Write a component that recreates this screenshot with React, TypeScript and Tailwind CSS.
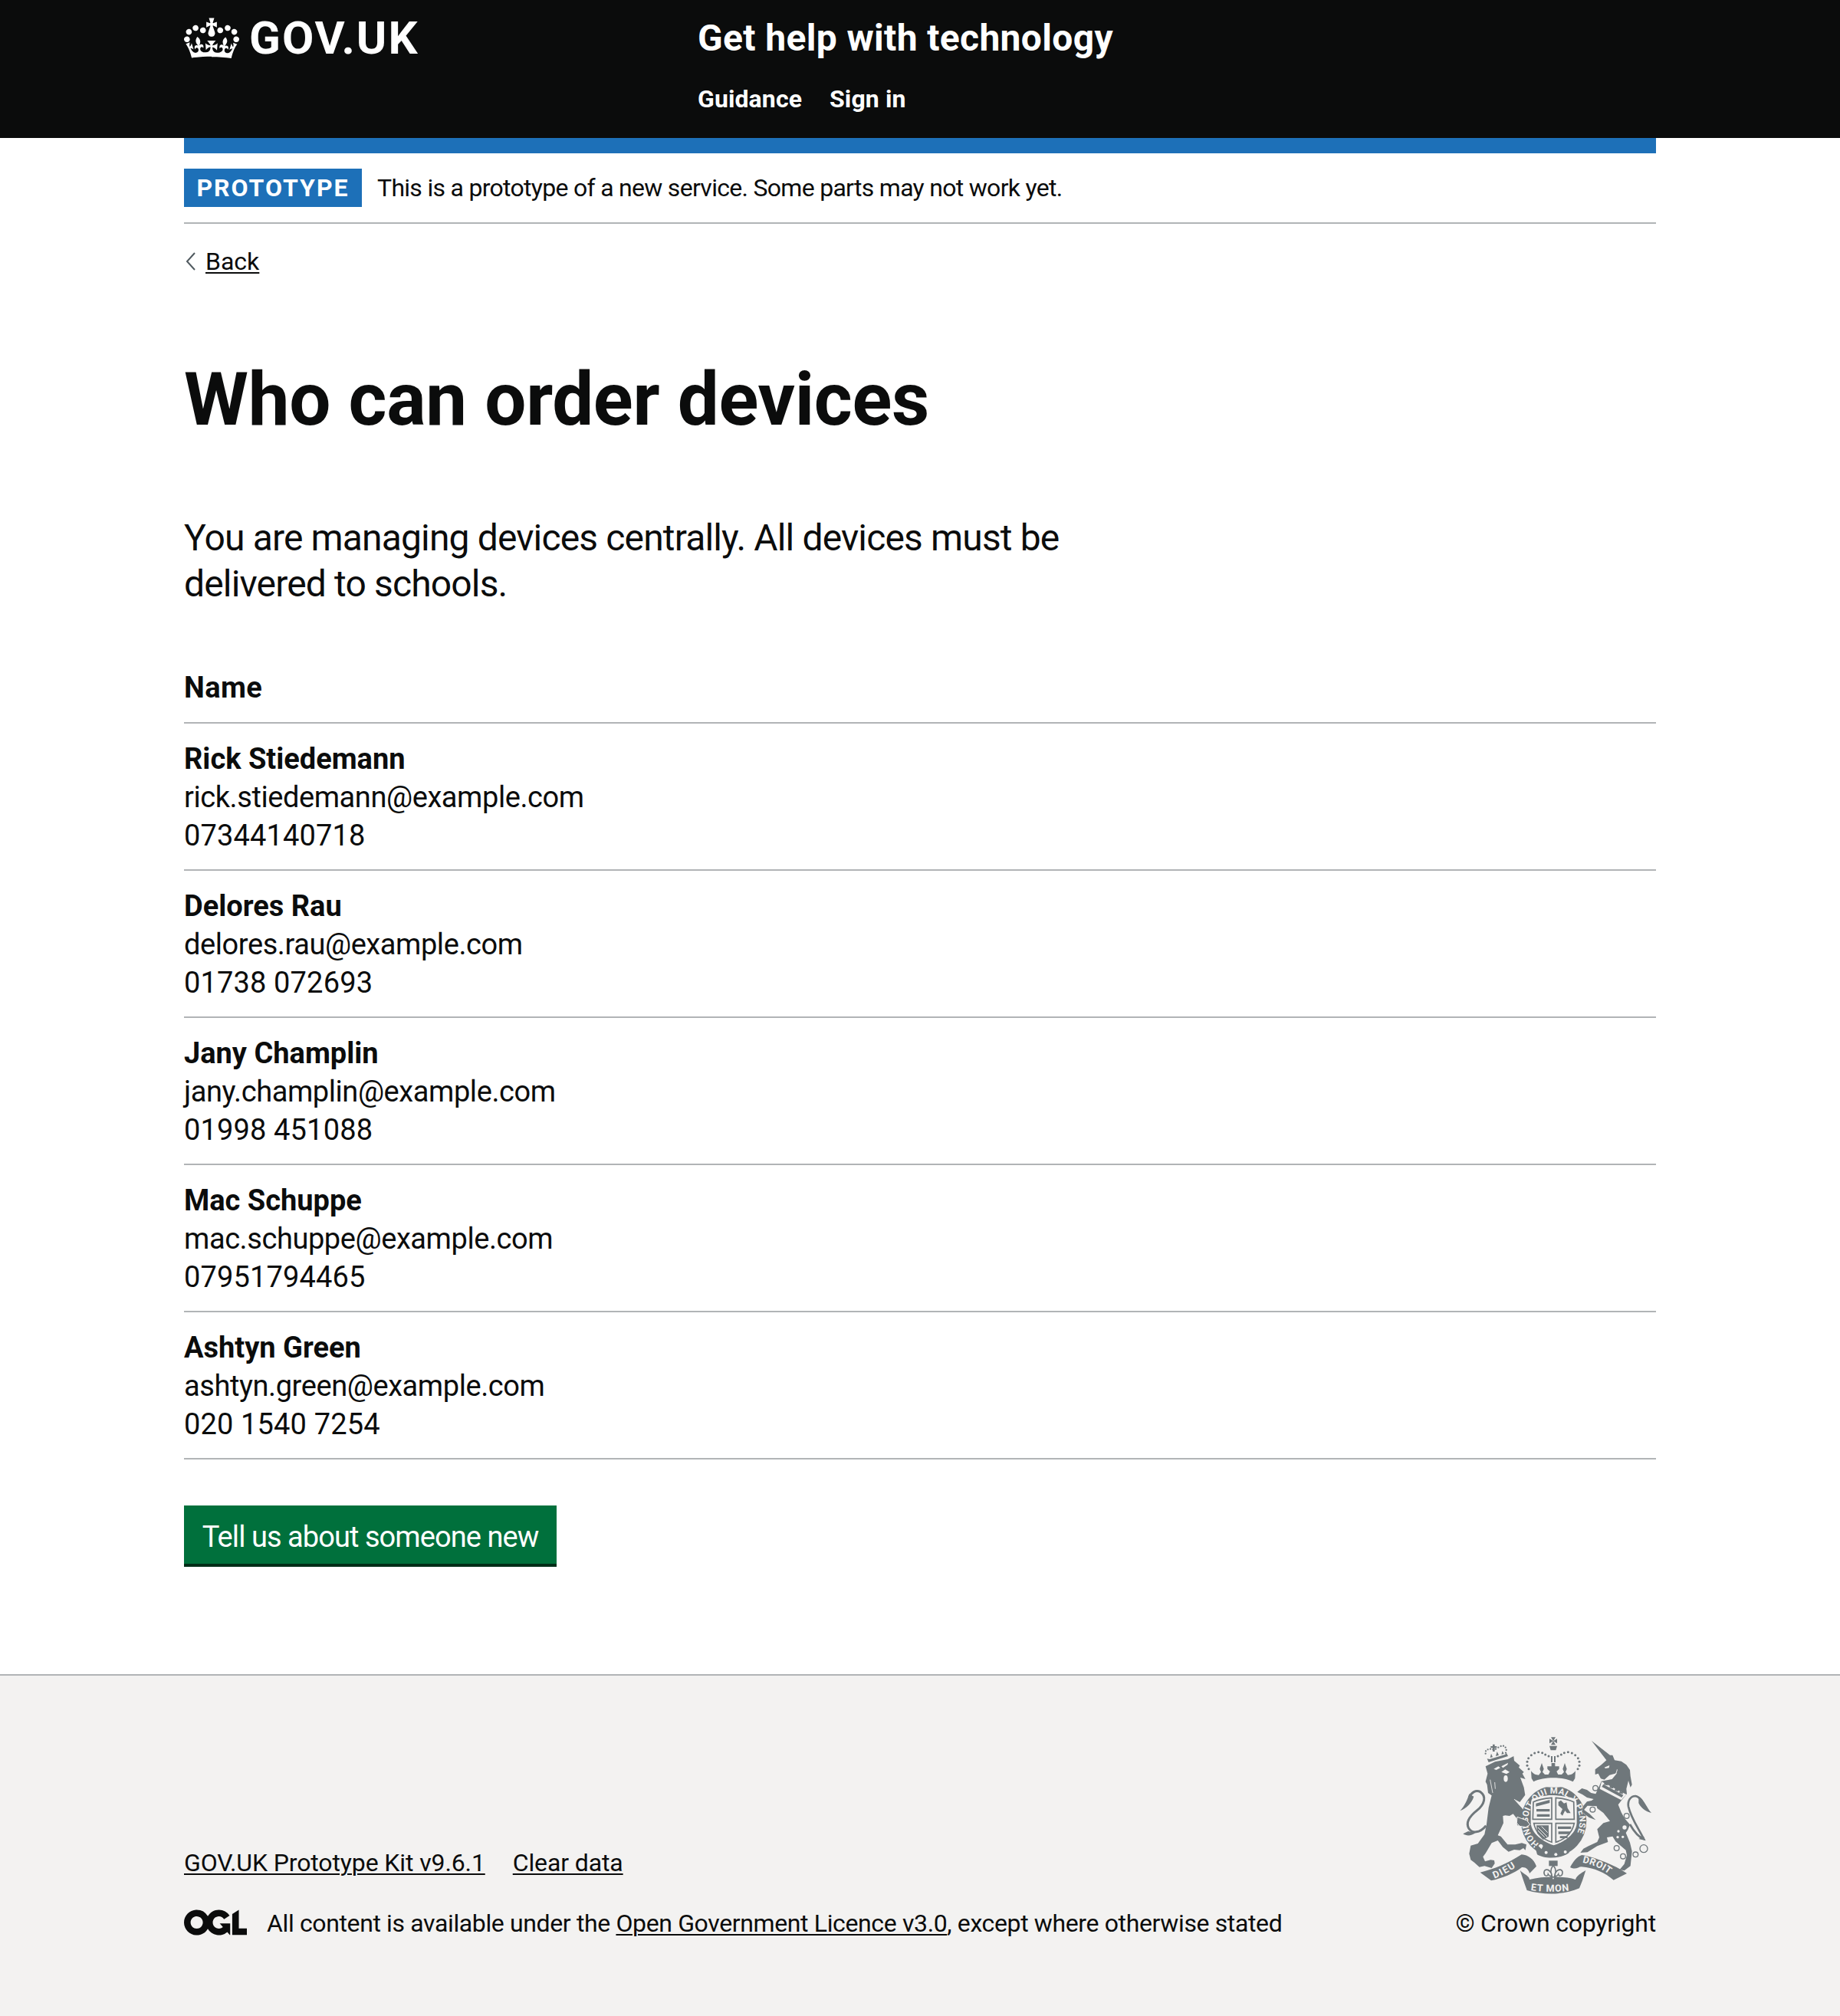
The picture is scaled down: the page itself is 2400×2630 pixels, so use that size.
const font = "[font-family:'Roboto',sans-serif]";

const people = [
  { name: "Rick Stiedemann", email: "rick.stiedemann@example.com", phone: "07344140718" },
  { name: "Delores Rau", email: "delores.rau@example.com", phone: "01738 072693" },
  { name: "Jany Champlin", email: "jany.champlin@example.com", phone: "01998 451088" },
  { name: "Mac Schuppe", email: "mac.schuppe@example.com", phone: "07951794465" },
  { name: "Ashtyn Green", email: "ashtyn.green@example.com", phone: "020 1540 7254" },
];

function Crown() {
  return (
    <svg viewBox="0 0 132 97" className="w-[72px] h-[60px] shrink-0" fill="currentColor">
      <path
        fillRule="evenodd"
        d="M25 30.2c3.5 1.5 7.7-.2 9.1-3.7 1.5-3.6-.2-7.8-3.9-9.2-3.6-1.4-7.6.3-9.1 3.9-1.4 3.5.3 7.5 3.9 9zM9 39.5c3.6 1.5 7.8-.2 9.2-3.7 1.5-3.6-.2-7.8-3.9-9.1-3.6-1.5-7.6.2-9.1 3.8-1.4 3.5.3 7.5 3.8 9zM4.4 57.2c3.5 1.5 7.7-.2 9.1-3.8 1.5-3.6-.2-7.7-3.9-9.1-3.5-1.5-7.6.3-9.1 3.8-1.4 3.5.3 7.6 3.9 9.1zm38.3-21.4c3.5 1.5 7.7-.2 9.1-3.8 1.5-3.6-.2-7.7-3.9-9.1-3.6-1.5-7.6.3-9.1 3.8-1.3 3.6.4 7.7 3.9 9.1zm64.4-5.6c-3.6 1.5-7.8-.2-9.1-3.7-1.5-3.6.2-7.8 3.8-9.2 3.6-1.4 7.7.3 9.2 3.9 1.3 3.5-.4 7.5-3.9 9zm15.9 9.3c-3.6 1.5-7.7-.2-9.1-3.7-1.5-3.6.2-7.8 3.7-9.1 3.6-1.5 7.7.2 9.2 3.8 1.5 3.5-.3 7.5-3.8 9zm4.7 17.7c-3.6 1.5-7.8-.2-9.2-3.8-1.5-3.6.2-7.7 3.9-9.1 3.6-1.5 7.7.3 9.2 3.8 1.3 3.5-.4 7.6-3.9 9.1zM89.3 35.8c-3.6 1.5-7.8-.2-9.2-3.8-1.4-3.6.2-7.7 3.9-9.1 3.6-1.5 7.7.3 9.2 3.8 1.4 3.6-.3 7.7-3.9 9.1zM69.7 17.7l8.9 4.7V9.3l-8.9 2.8c-.2-.3-.5-.6-.9-.9L72.4 0H59.6l3.5 11.2c-.3.3-.6.5-.9.9l-8.8-2.8v13.1l8.8-4.7c.3.3.6.7.9.9l-5 15.4v.1c-.2.8-.4 1.6-.4 2.4 0 4.1 3.1 7.5 7 8.1h.2c.3 0 .7.1 1 .1.4 0 .7 0 1-.1h.2c4-.6 7.1-4.1 7.1-8.1 0-.8-.1-1.7-.4-2.4V34l-5.1-15.4c.4-.2.7-.6 1-.9zM66 92.8c16.9 0 32.8 1.1 47.1 3.2 4-16.9 8.9-26.7 14-33.5l-9.6-3.4c1 4.9 1.1 7.2 0 10.2-1.5-1.4-3-4.3-4.2-8.7L108.6 76c2.8-2 5-3.2 7.5-3.3-4.4 9.4-10 11.9-13.6 11.2-4.3-.8-6.3-4.6-5.6-7.9 1-4.7 5.7-5.9 8-.5 4.3-8.7-3-11.4-7.6-8.8 7.1-7.2 7.9-13.5 2.1-21.1-8 6.1-8.1 12.3-4.5 20.8-4.7-5.4-12.1-2.5-9.5 6.2 3.4-5.2 7.9-2 7.2 3.1-.6 4.3-6.4 7.8-13.5 7.2-10.3-.9-10.9-8-11.2-13 2.5-.5 7.1 1.8 11 7.3L80.2 60c-4.1 4.4-8 5.3-12.3 5.4 1.4-4.4 8-11.6 8-11.6H55.5s6.4 7.2 7.9 11.6c-4.2-.1-8-1-12.3-5.4l1.4 16.4c3.9-5.5 8.5-7.7 10.9-7.3-.3 5-.7 12.1-11 13-7.2.6-12.9-2.9-13.5-7.2-.7-5 3.8-8.3 7.1-3.1 2.7-8.7-4.6-11.6-9.4-6.2 3.7-8.5 3.6-14.7-4.6-20.8-5.8 7.6-5 13.9 2.2 21.1-4.7-2.6-11.9.1-7.7 8.8 2.3-5.5 7.1-4.2 8.1.5.7 3.3-1.3 7.1-5.7 7.9-3.5.7-9-1.8-13.5-11.2 2.5.1 4.7 1.3 7.5 3.3l-4.7-15.4c-1.2 4.4-2.7 7.2-4.3 8.7-1.1-3-.9-5.3 0-10.2l-9.5 3.4c5 6.9 9.9 16.7 14 33.5 14.8-2.1 30.8-3.2 47.7-3.2z"
      />
    </svg>
  );
}

function OglLogo() {
  return (
    <svg viewBox="0 0 483.2 195.7" className="w-[82px] h-[34px] shrink-0 -mt-[2px]" fill="#0b0c0c">
      <path d="M421.5 142.8V.1l-50.7 32.3v161.1h112.4v-50.7zm-122.3-9.6A47.12 47.12 0 0 1 221 97.8c0-26 21.1-47.1 47.1-47.1 16.7 0 31.4 8.7 39.7 21.8l42.7-27.2A97.63 97.63 0 0 0 268.1 0c-36.5 0-68.3 20.1-85.1 49.7A98 98 0 0 0 97.8 0C43.9 0 0 43.9 0 97.8s43.9 97.8 97.8 97.8c36.5 0 68.3-20.1 85.1-49.7a97.76 97.76 0 0 0 149.6 25.4l19.4 22.2h3v-87.8h-80l24.3 27.5zM97.8 145c-26 0-47.1-21.1-47.1-47.1s21.1-47.1 47.1-47.1 47.2 21 47.2 47S123.8 145 97.8 145" />
    </svg>
  );
}

const lionCrownDots = [
  [128, 68], [129, 58], [137, 52], [147, 50], [157, 52], [168, 50], [178, 44], [188, 39], [198, 38], [206, 44], [209, 54], [207, 65],
];
const kingCrownDots = [
  [297, 128], [291, 115], [291, 100], [296, 86], [307, 74], [320, 66], [335, 62], [350, 65], [362, 72], [375, 78],
];

// royal arms, traced by eye from 3x crops of the reference (1 unit = 1/3 px)
function RoyalArms() {
  const ink = "#6f777b";
  const bg = "#f3f2f1";
  return (
    <svg viewBox="0 0 795 630" className="w-[265px] h-[210px] block" fill={ink}>
      {/* lion */}
      <path d="M128 118L165 100L215 90L238 78L240 96L262 115L258 122L278 140L272 146L284 168L264 162L278 200L283 230L262 258L240 246L288 300L298 322L302 346L286 356L268 352L252 348L250 322L236 304L222 312L205 310L196 312L198 340L176 388L188 392L214 424L244 424L270 418L288 424L284 446L276 438L262 446L240 444L218 452L196 434L176 408L152 418L128 458L118 472L126 490L148 484L162 486L164 498L152 516L124 508L104 512L84 494L70 484L64 460L70 428L98 420L124 384L132 344L140 280L152 232L138 222L134 190L128 178L136 146Z" />
      <path d="M130 350C105 380 75 382 62 360C48 335 70 310 95 290C125 265 132 235 108 218C90 208 72 220 64 240" fill="none" stroke={ink} strokeWidth="9" />
      <path d="M64 226C56 250 46 274 28 292C54 282 74 262 82 236ZM60 372L40 382C54 392 74 390 88 378Z" />
      <path d="M160 128L178 118L186 124L170 132ZM190 118L216 104L214 112L196 124ZM190 140L205 130L222 140L210 148Z" fill={bg} />
      <ellipse cx="207" cy="166" rx="8" ry="13" fill={bg} />
      <path d="M146 170L156 222M164 180L166 206M240 246L290 302" stroke={bg} strokeWidth="2.5" fill="none" />
      {/* lion crown */}
      {lionCrownDots.map(([x, y]) => (
        <circle key={`${x}-${y}`} cx={x} cy={y} r="3.4" />
      ))}
      <path d="M156 32h8v7h8v7h-8v14h-8V46h-8v-7h8zM146 84l4-16 6 14zM168 78l5-18 7 14zM190 72l4-14 6 10z" />
      <path d="M134 88l6 14 76-24-6-12-6 6-60 18z" />

      {/* garter and shield */}
      <g transform="translate(-45 -75)">
        <ellipse cx="440" cy="407" rx="128" ry="137" />
        <path id="garter" d="M382 495.5A101 108 0 1 1 505 490" fill="none" />
        <text fontSize="34" fill={bg} fontFamily="Roboto, sans-serif" fontWeight="700" letterSpacing="1">
          <textPath href="#garter">HONI SOIT QUI MAL Y PENSE</textPath>
        </text>
        <path d="M350 372c0-20 0-40 4-50 20-10 60-18 86-16s66 6 86 16c4 10 4 30 4 50v40c0 44-50 78-90 90-40-12-90-46-90-90z" fill={bg} />
        <path d="M360 332c20-10 45-14 72-16v84h-74zM448 316c24 2 48 6 70 16l2 68h-72zM362 416h70v74c-36-12-62-36-70-74zM448 416h72c-8 38-36 62-72 74z" fill="none" stroke={ink} strokeWidth="5" />
        <path d="M370 338l54-14v12l-54 14zM372 360h52v10h-52zM374 380h50v10h-50zM458 332l10-6 12 12 10-4 4 22 12 20-14 0-8-10-10 20-8-8 8-18-16-14zM456 428h52v10h-52zM458 448h46v10h-46zM464 466h30v8h-30z" />
        <path d="M372 424h48v44l-22 12-22-24z" />
        <path d="M378 432l36 36M378 444l26 26M392 428l24 24" stroke={bg} strokeWidth="3" fill="none" />
        <path d="M365 500c24 26 124 36 150-8l-16 40c-34 24-96 24-124 6z" />
        <path d="M380 505c4-8 12-12 18 0l-6 12z" fill={bg} />
        <circle cx="410" cy="530" r="6" fill={bg} />
        <circle cx="448" cy="538" r="6" fill={bg} />
        <circle cx="485" cy="528" r="6" fill={bg} />
      </g>
      <path d="M252 316L290 330L302 346L286 356L262 352L250 340Z" stroke={bg} strokeWidth="3" />

      {/* crown */}
      <ellipse cx="393" cy="183" rx="78" ry="17" fill={bg} />
      {kingCrownDots.map(([x, y]) => (
        <circle key={`l${x}-${y}`} cx={x} cy={y} r="4.5" />
      ))}
      {kingCrownDots.map(([x, y]) => (
        <circle key={`r${x}-${y}`} cx={786 - x} cy={y} r="4.5" />
      ))}
      <path d="M393 19L384 4H402ZM393 19L384 34H402ZM393 19L378 10V28ZM393 19L408 10V28ZM378 38H408L403 55H383ZM384 78h6v24h-6zM396 78h6v24h-6z" />
      <path d="M306 136C316 148 324 152 336 152L345 140L340 128L348 105L356 128L351 140L360 150L374 150L380 138L370 128L370 118L386 118L386 105L400 105L400 118L416 118L416 128L406 138L412 150L426 150L435 140L430 128L438 105L446 128L441 140L450 152C462 152 470 148 480 136L478 165L470 178C430 158 356 158 316 178L308 165Z" />

      {/* unicorn */}
      <g transform="translate(375 0)">
        <path d="M168 18L240 74L250 74L258 94L284 98L304 112L318 132L320 156L326 190L320 200L312 174L304 206L306 226L286 250L272 268L284 298L296 320L318 346L310 366L302 378L318 416L326 450L320 508L296 526L278 522L296 500L306 466L302 446L262 412L250 392L228 396L232 414L190 430L152 454L124 456L136 440L156 430L190 414L198 396L190 364L214 340L240 332L214 300L190 282L188 274L152 272L138 288L160 304L184 328L158 318L130 296L136 272L150 256L168 252L176 246L150 240L132 228L112 218L130 204L150 210L166 222L184 226L196 200L206 176L248 168L268 144L238 152L218 170L204 166L194 146L182 150L182 130L206 112L226 94Z" stroke={bg} strokeWidth="2" paintOrder="stroke" />
        <path d="M218 122L238 114L236 124L222 126Z" fill={bg} />
        <path d="M268 130C266 146 256 158 240 166" fill="none" stroke={bg} strokeWidth="3" />
        <path d="M207 178L304 228L284 250L200 206Z" fill={bg} />
        <path d="M208 198L286 240L292 230L214 188Z" />
        <path d="M216 190l3-12 5 7 5-4 2 12zM238 202l3-12 5 7 5-4 2 12zM258 213l3-12 5 7 5-4 2 12zM276 223l3-12 5 7 5-4 2 12z" />
        <g fill={bg} stroke={ink} strokeWidth="4">
          <circle cx="183" cy="203" r="10" />
          <circle cx="172" cy="287" r="10" />
          <circle cx="305" cy="312" r="10" />
          <circle cx="266" cy="438" r="10" />
          <circle cx="291" cy="470" r="10" />
          <circle cx="340" cy="463" r="10" />
          <circle cx="372" cy="440" r="15" />
        </g>
        <circle cx="297" cy="357" r="8" fill={bg} />
        <circle cx="273" cy="372" r="5" fill={bg} />
        <circle cx="270" cy="395" r="5" fill={bg} />
        <circle cx="290" cy="394" r="5" fill={bg} />
        <path d="M318 345C335 375 352 395 372 402C352 362 322 320 312 275C308 250 322 234 340 234C358 236 370 262 380 278" fill="none" stroke={ink} strokeWidth="8" />
        <path d="M352 236C372 246 384 280 402 300C380 296 362 282 352 262ZM352 402L372 392L378 408Z" />
      </g>

      {/* motto ribbon */}
      <g transform="translate(-45 -75)">
        <path d="M152 608C200 598 262 572 314 538C340 540 362 556 372 584L345 612C342 596 330 586 315 588C285 612 235 632 195 640Z" />
        <path d="M308 600C322 615 345 622 345 636C400 622 480 622 525 636C530 620 545 612 565 600L552 640L540 670C480 697 400 697 335 678L325 650Z" />
        <path d="M504 588C516 566 530 546 550 540C600 548 680 580 726 612L674 638C640 610 600 590 548 586C536 586 526 600 504 588Z" />
        <path id="mottoLeft" d="M208 632C240 620 276 600 314 572" fill="none" />
        <path id="mottoMid" d="M350 678C400 686 480 686 526 674" fill="none" />
        <path id="mottoRight" d="M552 570C590 576 636 594 672 630" fill="none" />
        <g fontFamily="Roboto, sans-serif" fontWeight="700" fill={bg} fontSize="38">
          <text letterSpacing="4"><textPath href="#mottoLeft">DIEU</textPath></text>
          <text letterSpacing="2"><textPath href="#mottoMid">ET MON</textPath></text>
          <text letterSpacing="1"><textPath href="#mottoRight">DROIT</textPath></text>
        </g>
      </g>
      {/* fleur-de-lis */}
      <path d="M376 487H410V508H376Z" />
      <g fill={bg} stroke={ink} strokeWidth="5">
        <path d="M393 505C405 520 408 535 393 558C378 535 381 520 393 505Z" />
        <path d="M400 538C412 514 434 520 428 540C425 550 414 548 413 540C410 546 406 548 400 548Z" />
        <path d="M386 538C374 514 352 520 358 540C361 550 372 548 373 540C376 546 380 548 386 548Z" />
        <path d="M385 552L393 566L401 552Z" />
      </g>
    </svg>
  );
}

const linkClass = "underline decoration-2 underline-offset-[3px]";

export default function App() {
  return (
    <div className={`${font} min-h-[2630px] flex flex-col bg-white text-[#0b0c0c]`}>
      <header className="bg-[#0b0c0c] text-white h-[180px] shrink-0">
        <div className="w-[1920px] mx-auto flex">
          <div className="w-[670px] h-[100px] flex items-center gap-[13px]">
            <Crown />
            <span className="font-bold text-[60px] leading-[60px] tracking-[2px]">GOV.UK</span>
          </div>
          <div className="w-[1250px]">
            <div className="h-[100px] flex items-center font-bold text-[48px] leading-[60px] tracking-[0.35px]">
              Get help with technology
            </div>
            <nav className="flex gap-[36px] mt-[9px] font-bold text-[32px] leading-[40px] tracking-[0.1px]">
              <span>Guidance</span>
              <span>Sign in</span>
            </nav>
          </div>
        </div>
      </header>

      <main className="w-[1920px] mx-auto shrink-0">
        <div className="h-[20px] bg-[#1d70b8]" />
        <div className="py-[20px] border-b-2 border-[#b1b4b6] flex items-center gap-[20px]">
          <strong className="bg-[#1d70b8] text-white h-[50px] w-[232px] flex items-center justify-center font-bold text-[32px] leading-[40px] tracking-[2px]">
            PROTOTYPE
          </strong>
          <span className="text-[32px] leading-[50px] tracking-[-0.71px]">
            This is a prototype of a new service. Some parts may not work yet.
          </span>
        </div>

        <div className="mt-[29px] h-[40px] flex items-center gap-[12px] text-[32px] leading-[40px]">
          <svg viewBox="0 0 14 26" className="w-[14px] h-[26px] ml-[2px]" fill="none" stroke="#505a5f" strokeWidth="2">
            <path d="M12 2L2 13l10 11" />
          </svg>
          <a className={linkClass}>Back</a>
        </div>

        <h1 className="mt-[110px] font-bold text-[96px] leading-[100px] tracking-[-0.32px]">Who can order devices</h1>

        <p className="mt-[101px] w-[1280px] text-[48px] leading-[60px] tracking-[-0.85px]">
          You are managing devices centrally. All devices must be delivered to schools.
        </p>

        <div className="mt-[60px] pt-[20px] pb-[20px] border-b-2 border-[#b1b4b6] font-bold text-[38px] leading-[50px] tracking-[0.4px]">
          Name
        </div>
        {people.map((p) => (
          <div key={p.email} className="pt-[21px] pb-[19px] border-b-2 border-[#b1b4b6] text-[38px] leading-[50px]">
            <div className="font-bold">{p.name}</div>
            <div className="tracking-[-0.42px]">{p.email}</div>
            <div className="tracking-[0.15px]">{p.phone}</div>
          </div>
        ))}

        <button className="mt-[60px] block w-[486px] h-[80px] pt-[6px] bg-[#00703c] border-b-4 border-[#002d18] text-white text-[38px] leading-[50px] tracking-[-0.94px]">
          Tell us about someone new
        </button>
      </main>

      <footer className="mt-[140px] grow bg-[#f3f2f1] border-t-2 border-[#b1b4b6] text-[32px] leading-[40px]">
        <div className="w-[1920px] mx-auto pt-[79px] flex justify-between items-start">
          <div className="pt-[145px]">
            <div className="flex gap-[36px] tracking-[-0.12px]">
              <a className={linkClass}>GOV.UK Prototype Kit v9.6.1</a>
              <a className={linkClass}>Clear data</a>
            </div>
            <div className="mt-[39px] flex items-center gap-[26px] tracking-[-0.37px]">
              <OglLogo />
              <span>
                All content is available under the{" "}
                <a className={linkClass}>Open Government Licence v3.0</a>, except where otherwise stated
              </span>
            </div>
          </div>
          <div className="flex flex-col items-end">
            <RoyalArms />
            <span className="mt-[14px] tracking-[-0.2px]">© Crown copyright</span>
          </div>
        </div>
      </footer>
    </div>
  );
}
